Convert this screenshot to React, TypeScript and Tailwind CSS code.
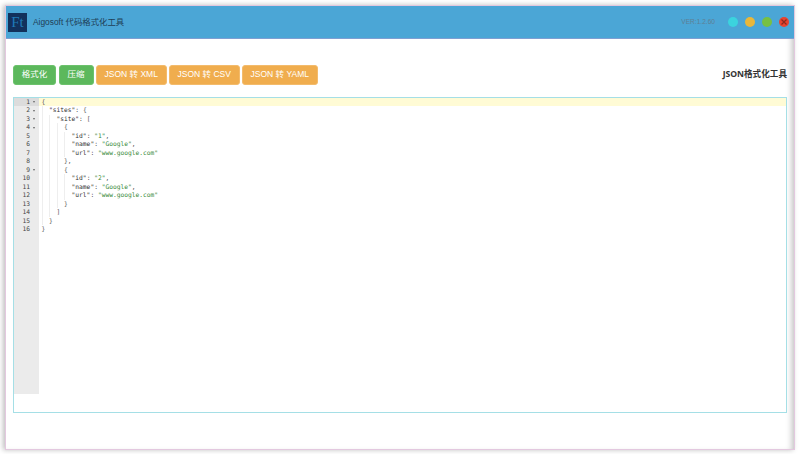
const lines: { indent: number; parts: [string, string][]; fold?: boolean }[] = [
  { indent: 0, parts: [['{', 'p']], fold: true },
  { indent: 1, parts: [['"sites"', 'k'], [': {', 'p']], fold: true },
  { indent: 2, parts: [['"site"', 'k'], [': [', 'p']], fold: true },
  { indent: 3, parts: [['{', 'p']], fold: true },
  { indent: 4, parts: [['"id"', 'k'], [': ', 'p'], ['"1"', 's'], [',', 'p']] },
  { indent: 4, parts: [['"name"', 'k'], [': ', 'p'], ['"Google"', 's'], [',', 'p']] },
  { indent: 4, parts: [['"url"', 'k'], [': ', 'p'], ['"www.google.com"', 's']] },
  { indent: 3, parts: [['},', 'p']] },
  { indent: 3, parts: [['{', 'p']], fold: true },
  { indent: 4, parts: [['"id"', 'k'], [': ', 'p'], ['"2"', 's'], [',', 'p']] },
  { indent: 4, parts: [['"name"', 'k'], [': ', 'p'], ['"Google"', 's'], [',', 'p']] },
  { indent: 4, parts: [['"url"', 'k'], [': ', 'p'], ['"www.google.com"', 's']] },
  { indent: 3, parts: [['}', 'p']] },
  { indent: 2, parts: [[']', 'p']] },
  { indent: 1, parts: [['}', 'p']] },
  { indent: 0, parts: [['}', 'p']] },
]

// Ace-style read-only JSON view
function Editor() {
  return (
    <div className="mx-[7px] mt-[10px] h-[316px] border border-[#a5dfe6] bg-white flex font-['DejaVu_Sans_Mono',monospace] text-[6.25px] leading-[8.47px]">
      <div className="w-[25px] h-[296px] bg-[#ebebeb] shrink-0 text-[#444]">
        {lines.map((l, i) => (
          <div key={i} className={`h-[8.47px] flex justify-end pr-[2px] ${i === 0 ? 'bg-[#dcdcdc]' : ''}`}>
            <span>{i + 1}</span>
            <span className="w-[7px] flex items-center justify-center">
              {l.fold && <span className="block border-x-[1.5px] border-t-[2px] border-x-transparent border-t-[#666]" />}
            </span>
          </div>
        ))}
      </div>
      <div className="flex-1">
        {lines.map((l, i) => (
          <div key={i} className={`h-[8.47px] pl-[2.5px] flex whitespace-pre ${i === 0 ? 'bg-[#fffbd5]' : ''}`}>
            {Array.from({ length: l.indent }).map((_, j) => (
              <span key={j} className="w-[7.52px] h-full border-l border-[#eeeeee] shrink-0" />
            ))}
            {l.parts.map(([t, c], j) => (
              <span
                key={j}
                className={c === 's' ? 'text-[#3a8a3a]' : c === 'k' ? 'text-[#333]' : 'text-[#555]'}
              >
                {t}
              </span>
            ))}
          </div>
        ))}
      </div>
    </div>
  )
}

export default function App() {
  const btn =
    "h-[20px] rounded-[3px] border text-white text-[8.5px] flex items-center justify-center font-['Liberation_Sans','Noto_Sans_CJK_SC',sans-serif]"
  const green = 'bg-[#5cb85c] border-[#6cc26c]'
  const orange = 'bg-[#f0ad4e] border-[#f3bb6c]'

  return (
    <div className="w-[800px] h-[454px] bg-white pt-[5px] pl-[5px] overflow-hidden">
      <div className="w-[790px] h-[445px] bg-white border border-[#e3c8df] shadow-[-2px_0_5px_rgba(0,0,0,0.25),inset_-6px_0_6px_-4px_rgba(0,0,0,0.25)]">
        {/* Title bar */}
        <div className="h-[33px] bg-[#4ba6d6] border-b border-[#7f9fd2] flex items-center pl-[2px] pr-[5px] font-['Liberation_Sans','Noto_Sans_CJK_SC',sans-serif]">
          <div className="w-[19px] h-[19px] bg-[#12315c] text-[#1f7ab8] text-[15px] leading-[19px] text-center font-['Liberation_Serif',serif]">
            Ft
          </div>
          <span className="ml-[6px] text-[8.4px] text-[#1f3f57]">Aigosoft 代码格式化工具</span>
          <span className="ml-auto text-[6.6px] text-[#5f7f95]">VER:1.2.60</span>
          <div className="flex items-center gap-[7px] ml-[13px]">
            <span className="w-[10px] h-[10px] rounded-full bg-[#3bd3de]" />
            <span className="w-[10px] h-[10px] rounded-full bg-[#e9b73a]" />
            <span className="w-[10px] h-[10px] rounded-full bg-[#77c043]" />
            <span className="w-[10px] h-[10px] rounded-full bg-[#e8432f] text-[#8a2a20] flex items-center justify-center">
              <svg width="8" height="8" viewBox="0 0 8 8" stroke="currentColor" strokeWidth="1.2">
                <path d="M1.5 1.5l5 5M6.5 1.5l-5 5" />
              </svg>
            </span>
          </div>
        </div>

        {/* Toolbar */}
        <div className="h-[25px] mt-[23px] px-[7px] flex items-center gap-[2.5px]">
          <button className={`${btn} ${green} w-[43px]`}>格式化</button>
          <button className={`${btn} ${green} w-[35px]`}>压缩</button>
          <button className={`${btn} ${orange} w-[70.5px]`}>JSON 转 XML</button>
          <button className={`${btn} ${orange} w-[70.5px]`}>JSON 转 CSV</button>
          <button className={`${btn} ${orange} w-[75.5px]`}>JSON 转 YAML</button>
          <span className="ml-auto text-[8.6px] font-bold text-[#333] font-['Open_Sans','Noto_Sans_CJK_SC',sans-serif]">
            JSON格式化工具
          </span>
        </div>

        <Editor />
      </div>
    </div>
  )
}
